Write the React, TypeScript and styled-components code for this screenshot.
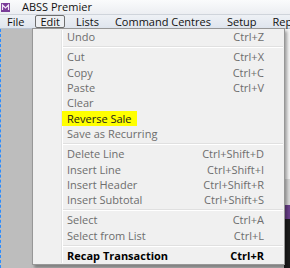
import React from "react";
import styled, { createGlobalStyle } from "styled-components";

const Global = createGlobalStyle`
  html, body { margin: 0; padding: 0; }
  body { width: 290px; height: 268px; overflow: hidden; background: #bdbdbd; }
  #root { width: 290px; height: 268px; }
`;

const Window = styled.div`
  width: 290px;
  height: 268px;
  display: flex;
  flex-direction: column;
  overflow: hidden;
  position: relative;
  font-family: "Open Sans", "Noto Sans", sans-serif;
`;

const TitleBar = styled.div`
  height: 14px;
  flex: none;
  display: flex;
  align-items: center;
  gap: 12px;
  padding-left: 1px;
  background: linear-gradient(#fafbfc, #eceef2);
  border-bottom: 1px solid #cfd4db;
  font-size: 11px;
  color: #111;
`;

const TitleText = styled.span`
  line-height: 14px;
`;

const MenuBar = styled.div`
  height: 13px;
  flex: none;
  display: flex;
  align-items: center;
  gap: 6px;
  padding-left: 2px;
  background: linear-gradient(#eef1f5, #dfe5ee);
  border-bottom: 1px solid #b9c3d1;
  font-size: 11px;
  color: #111;
  white-space: nowrap;
`;

const MenuItem = styled.div<{ $open?: boolean }>`
  height: 11px;
  line-height: 11px;
  padding: 0 4px;
  border: 1px solid ${(p) => (p.$open ? "#6e6e6e" : "transparent")};
  border-radius: 2px;
  background: ${(p) => (p.$open ? "#eef0f3" : "transparent")};
`;

const Workspace = styled.div`
  flex: 1;
  display: flex;
`;

const LeftStrip = styled.div`
  width: 32px;
  background: #bdbdbd;
  border-left: 1px dashed #2b8cff;
  box-sizing: border-box;
`;

const Center = styled.div`
  flex: 1;
  background: #c3c3c3;
`;

const RightStrip = styled.div`
  width: 6px;
  display: flex;
  flex-direction: column;
`;

const RightPart = styled.div<{ $c: string; $h: number }>`
  height: ${(p) => p.$h}px;
  background: ${(p) => p.$c};
  flex: ${(p) => (p.$h === 0 ? 1 : "none")};
`;

const Dropdown = styled.div`
  position: absolute;
  left: 32px;
  top: 28px;
  width: 253px;
  box-sizing: border-box;
  padding: 0 0 1px;
  background: #f0f0f0;
  border: 1px solid #979797;
  box-shadow: 2px 3px 3px rgba(0, 0, 0, 0.35);
  font-size: 11px;
  color: #6d6d6d;
  &::before {
    content: "";
    position: absolute;
    left: 28px;
    top: 1px;
    bottom: 1px;
    width: 1px;
    background: #e2e3e3;
    box-shadow: 1px 0 0 #ffffff;
  }
`;

const Row = styled.div<{ $bold?: boolean; $dark?: boolean }>`
  height: 15.3px;
  display: flex;
  align-items: center;
  justify-content: space-between;
  padding: 0 20px 0 29px;
  font-weight: ${(p) => (p.$bold ? 700 : 400)};
  color: ${(p) => (p.$bold ? "#000" : p.$dark ? "#1a1a1a" : "#6d6d6d")};
  position: relative;
  white-space: nowrap;
`;

const Label = styled.span<{ $hl?: boolean }>`
  padding: 0 5px;
  line-height: 15px;
  background: ${(p) => (p.$hl ? "#ffff00" : "transparent")};
`;

const Shortcut = styled.span``;

const Separator = styled.div`
  height: 1px;
  margin: 2px 1px 1px 30px;
  background: #e0e0e0;
  border-bottom: 1px solid #ffffff;
`;

type Item = { label: string; key?: string; hl?: boolean; bold?: boolean } | "sep";

const items: Item[] = [
  { label: "Undo", key: "Ctrl+Z" },
  "sep",
  { label: "Cut", key: "Ctrl+X" },
  { label: "Copy", key: "Ctrl+C" },
  { label: "Paste", key: "Ctrl+V" },
  { label: "Clear" },
  { label: "Reverse Sale", hl: true },
  { label: "Save as Recurring" },
  "sep",
  { label: "Delete Line", key: "Ctrl+Shift+D" },
  { label: "Insert Line", key: "Ctrl+Shift+I" },
  { label: "Insert Header", key: "Ctrl+Shift+R" },
  { label: "Insert Subtotal", key: "Ctrl+Shift+S" },
  "sep",
  { label: "Select", key: "Ctrl+A" },
  { label: "Select from List", key: "Ctrl+L" },
  "sep",
  { label: "Recap Transaction", key: "Ctrl+R", bold: true },
];

const AppIcon = () => (
  <svg width="9" height="9" viewBox="0 0 9 9">
    <rect x="0" y="0" width="9" height="9" fill="#7a3c98" />
    <path d="M1.5 7 L1.5 2 L4.5 5 L7.5 2 L7.5 7" stroke="#f2e6f7" strokeWidth="1.2" fill="none" />
  </svg>
);

export default function App() {
  return (
    <Window>
      <Global />
      <TitleBar>
        <AppIcon />
        <TitleText>ABSS Premier</TitleText>
      </TitleBar>
      <MenuBar>
        <MenuItem>File</MenuItem>
        <MenuItem $open>Edit</MenuItem>
        <MenuItem>Lists</MenuItem>
        <MenuItem>Command Centres</MenuItem>
        <MenuItem>Setup</MenuItem>
        <MenuItem>Reports</MenuItem>
      </MenuBar>
      <Workspace>
        <LeftStrip />
        <Center />
        <RightStrip>
          <RightPart $c="#f3f3f3" $h={150} />
          <RightPart $c="#d8d8d8" $h={26} />
          <RightPart $c="#6b3f8c" $h={14} />
          <RightPart $c="#1c1c1c" $h={0} />
        </RightStrip>
      </Workspace>
      <Dropdown>
        {items.map((it, i) =>
          it === "sep" ? (
            <Separator key={i} />
          ) : (
            <Row key={i} $bold={it.bold} $dark={it.hl}>
              <Label $hl={it.hl}>{it.label}</Label>
              {it.key && <Shortcut>{it.key}</Shortcut>}
            </Row>
          )
        )}
      </Dropdown>
    </Window>
  );
}
